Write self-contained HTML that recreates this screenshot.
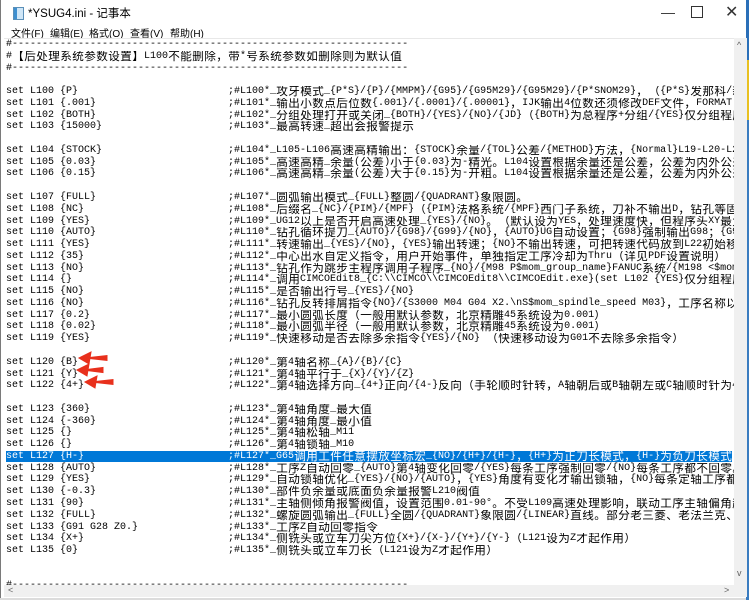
<!DOCTYPE html>
<html><head><meta charset="utf-8"><style>
html,body{margin:0;padding:0;width:749px;height:600px;overflow:hidden;background:#dcdcdc;position:relative;font-family:"Liberation Sans","Noto Sans CJK SC",sans-serif}
#desk{position:absolute;left:746px;top:0;width:3px;height:600px;background:linear-gradient(#2a6fb8 0 60px,#e8c020 60px 120px,#3a7cc0 120px 600px)}
#win{position:absolute;left:0;top:0;width:746px;height:598px;background:#fff;border-left:1px solid #7a7a7a;box-sizing:border-box}
#title{position:absolute;left:27px;top:5px;font-size:11.5px;color:#000}
#icon{position:absolute;left:12px;top:7px;width:9px;height:11px;background:linear-gradient(90deg,#3d8fd0 0 3px,#cfe6f7 3px);border:1px solid #5a8fb8}
.ctl{position:absolute;top:4px;font-size:14px;color:#333}
#menu{position:absolute;left:0;top:25px;font-size:10px;color:#000}
#menu span{position:absolute;white-space:nowrap;top:0}
#text{position:absolute;left:3px;top:38px;width:730px;height:547px;overflow:hidden;border-top:1px solid #e8e8e8}
.l{position:absolute;left:2px;height:11.77px;line-height:11.77px;white-space:pre;font-family:"Liberation Mono","Noto Sans CJK SC",monospace;font-size:10px;color:#000;letter-spacing:0}
.l .c{font-size:11.6px;font-family:"Noto Sans CJK SC",sans-serif;display:inline-block;width:12px;text-align:center;overflow:hidden;vertical-align:top}
.sel{background:#0078d7;color:#fff}
#vs{position:absolute;left:733px;top:38px;width:13px;height:547px;background:#f0f0f0}
#hs{position:absolute;left:3px;top:585px;width:743px;height:12px;background:#f0f0f0}
.arr{position:absolute;font-size:9px;color:#606060}
</style></head><body>
<div id="desk"></div>
<div id="win">
<div id="icon"></div>
<div id="title">*YSUG4.ini - 记事本</div>
<div class="ctl" style="left:660px">—</div>
<div class="ctl" style="left:690px;top:6px;width:10px;height:10px;border:1px solid #333"></div>
<div class="ctl" style="left:724px;top:2px;font-size:16px">✕</div>
<div id="menu"><span style="left:10px">文件(F)</span><span style="left:49px">编辑(E)</span><span style="left:88px">格式(O)</span><span style="left:129px">查看(V)</span><span style="left:169px">帮助(H)</span></div>
<div id="text"></div>
<div id="vs"><span class="arr" style="left:3px;top:2px">^</span><span class="arr" style="left:3px;top:530px">v</span></div>
<div id="hs"><span class="arr" style="left:4px;top:0px">&lt;</span><span class="arr" style="left:720px;top:0px">&gt;</span></div>
<svg style="position:absolute;left:0;top:0" width="749" height="600">
<g fill="#e8301c" stroke="#e8301c">
<path d="M84 358 L106 355.5 L106 360.5 Z" stroke-width="1"/><path d="M78 358 L90 352 L88 364 Z"/>
<path d="M82 370 L102 367.5 L102 372.5 Z" stroke-width="1"/><path d="M76 370 L88 364 L86 376 Z"/>
<path d="M90 382 L112 379.5 L112 384.5 Z" stroke-width="1"/><path d="M84 382 L96 376 L94 388 Z"/>
</g></svg>
</div>
<script>
const D='#'+'-'.repeat(66);
const pad=s=>s+' '.repeat(Math.max(1,37-s.length));
const L=[
D,
'#【后处理系统参数设置】L100不能删除，带*号系统参数如删除则为默认值',
D,'',
[pad('set L100 {P}'),';#L100*_攻牙模式_{P*S}/{P}/{MMPM}/{G95}/{G95M29}/{G95M29}/{P*SNOM29}，（{P*S}发那科/新代'],
[pad('set L101 {.001}'),';#L101*_输出小数点后位数{.001}/{.0001}/{.00001}，IJK输出4位数还须修改DEF文件，FORMAT AT'],
[pad('set L102 {BOTH}'),';#L102*_分组处理打开或关闭_{BOTH}/{YES}/{NO}/{JD}（{BOTH}为总程序+分组/{YES}仅分组程序'],
[pad('set L103 {15000}'),';#L103*_最高转速_超出会报警提示'],
'',
[pad('set L104 {STOCK}'),';#L104*_L105-L106高速高精输出：{STOCK}余量/{TOL}公差/{METHOD}方法，{Normal}L19-L20-L21'],
[pad('set L105 {0.03}'),';#L105*_高速高精_余量(公差)小于{0.03}为-精光。L104设置根据余量还是公差，公差为内外公差'],
[pad('set L106 {0.15}'),';#L106*_高速高精_余量(公差)大于{0.15}为-开粗。L104设置根据余量还是公差，公差为内外公差'],
'',
[pad('set L107 {FULL}'),';#L107*_圆弧输出模式_{FULL}整圆/{QUADRANT}象限圆。'],
[pad('set L108 {NC}'),';#L108*_后缀名_{NC}/{PIM}/{MPF}（{PIM}法格系统/{MPF}西门子系统，刀补不输出D，钻孔等固定'],
[pad('set L109 {YES}'),';#L109*_UG12以上是否开启高速处理_{YES}/{NO}。（默认设为YES，处理速度快，但程序头XY最大'],
[pad('set L110 {AUTO}'),';#L110*_钻孔循环提刀_{AUTO}/{G98}/{G99}/{NO}，{AUTO}UG自动设置；{G98}强制输出G98；{G99'],
[pad('set L111 {YES}'),';#L111*_转速输出_{YES}/{NO}，{YES}输出转速；{NO}不输出转速，可把转速代码放到L22初始移动'],
[pad('set L112 {35}'),';#L112*_中心出水自定义指令，用户开始事件，单独指定工序冷却为Thru（详见PDF设置说明）'],
[pad('set L113 {NO}'),';#L113*_钻孔作为跳步主程序调用子程序_{NO}/{M98 P$mom_group_name}FANUC系统/{M198 <$mom_'],
[pad('set L114 {}'),';#L114*_调用CIMCOEdit8_{C:\\\\CIMCO\\\\CIMCOEdit8\\\\CIMCOEdit.exe}(set L102 {YES}仅分组程序'],
[pad('set L115 {NO}'),';#L115*_是否输出行号_{YES}/{NO}'],
[pad('set L116 {NO}'),';#L116*_钻孔反转排屑指令{NO}/{S3000 M04 G04 X2.\\nS$mom_spindle_speed M03}，工序名称以M'],
[pad('set L117 {0.2}'),';#L117*_最小圆弧长度（一般用默认参数，北京精雕45系统设为0.001）'],
[pad('set L118 {0.02}'),';#L118*_最小圆弧半径（一般用默认参数，北京精雕45系统设为0.001）'],
[pad('set L119 {YES}'),';#L119*_快速移动是否去除多余指令{YES}/{NO} （快速移动设为G01不去除多余指令）'],
'',
[pad('set L120 {B}'),';#L120*_第4轴名称_{A}/{B}/{C}'],
[pad('set L121 {Y}'),';#L121*_第4轴平行于_{X}/{Y}/{Z}'],
[pad('set L122 {4+}'),';#L122*_第4轴选择方向_{4+}正向/{4-}反向（手轮顺时针转，A轴朝后或B轴朝左或C轴顺时针为4+'],
'',
[pad('set L123 {360}'),';#L123*_第4轴角度_最大值'],
[pad('set L124 {-360}'),';#L124*_第4轴角度_最小值'],
[pad('set L125 {}'),';#L125*_第4轴松轴_M11'],
[pad('set L126 {}'),';#L126*_第4轴锁轴_M10'],
[pad('set L127 {H-}'),';#L127*_G65调用工件任意摆放坐标宏_{NO}/{H+}/{H-}，{H+}为正刀长模式，{H-}为负刀长模式','sel'],
[pad('set L128 {AUTO}'),';#L128*_工序Z自动回零_{AUTO}第4轴变化回零/{YES}每条工序强制回零/{NO}每条工序都不回零。'],
[pad('set L129 {YES}'),';#L129*_自动锁轴优化_{YES}/{NO}/{AUTO}，{YES}角度有变化才输出锁轴，{NO}每条定轴工序都输'],
[pad('set L130 {-0.3}'),';#L130*_部件负余量或底面负余量报警L210阀值'],
[pad('set L131 {90}'),';#L131*_主轴侧倾角报警阀值，设置范围0.01-90°。不受L109高速处理影响，联动工序主轴偏角超'],
[pad('set L132 {FULL}'),';#L132*_螺旋圆弧输出_{FULL}全圆/{QUADRANT}象限圆/{LINEAR}直线。部分老三菱、老法兰克、设'],
[pad('set L133 {G91 G28 Z0.}'),';#L133*_工序Z自动回零指令'],
[pad('set L134 {X+}'),';#L134*_侧铣头或立车刀尖方位{X+}/{X-}/{Y+}/{Y-}（L121设为Z才起作用）'],
[pad('set L135 {0}'),';#L135*_侧铣头或立车刀长（L121设为Z才起作用）'],
'','',D
];
const esc=s=>s.replace(/&/g,'&amp;').replace(/</g,'&lt;');
const wrap=s=>{let o='';for(const ch of s){const cp=ch.codePointAt(0);if(cp>0x2000&&ch!=='°'){o+='<span class="c">'+esc(ch)+'</span>'}else o+=esc(ch)}return o};
const T=document.getElementById('text');let h='';
L.forEach((x,i)=>{let s,cls='';if(Array.isArray(x)){s=x[0]+x[1];if(x[2])cls=' sel'}else s=x;
h+='<div class="l" style="top:'+(i*11.77).toFixed(2)+'px"><span class="'+cls.trim()+'">'+wrap(s)+'</span></div>'});
T.innerHTML=h;
</script>
</body></html>
